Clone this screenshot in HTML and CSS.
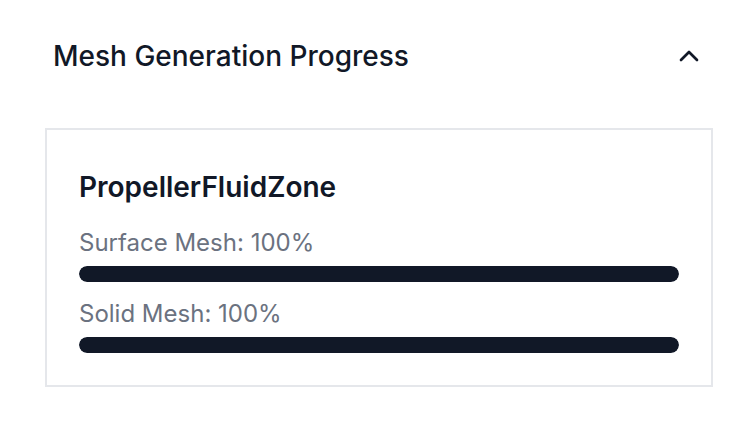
FILE: index.html
```html
<!DOCTYPE html>
<html>
<head>
<meta charset="utf-8">
<link rel="stylesheet" href="styles.css">
</head>
<body>
<div class="panel">
  <div class="header">
    <h2 class="title">Mesh Generation Progress</h2>
    <svg class="chev" width="32" height="32" viewBox="0 0 24 24" fill="none" stroke="#111827" stroke-width="2" stroke-linecap="round" stroke-linejoin="round"><path d="m18 15-6-6-6 6"/></svg>
  </div>
  <div class="card">
    <div class="zone">PropellerFluidZone</div>
    <div class="group">
      <div class="label">Surface Mesh: 100%</div>
      <div class="track"><div class="fill" style="width:100%"></div></div>
    </div>
    <div class="group">
      <div class="label">Solid Mesh: 100%</div>
      <div class="track"><div class="fill" style="width:100%"></div></div>
    </div>
  </div>
</div>
</body>
</html>
```
FILE: styles.css
```css
html, body {
  margin: 0;
  padding: 0;
  background: #ffffff;
  font-family: Inter, "Noto Sans", sans-serif;
  color: #111827;
}
.panel {
  padding: 40px 39px 0 45px;
}
.header {
  display: flex;
  align-items: center;
  justify-content: space-between;
  height: 32px;
  padding: 0 8px;
  margin-bottom: 56px;
}
.title {
  margin: 0;
  font-size: 28px;
  font-weight: 500;
  line-height: 32px;
  color: #111827;
}
.chev {
  display: block;
}
.card {
  border: 2px solid #e5e7eb;
  padding: 37px 32px 32px 32px;
  display: flex;
  flex-direction: column;
}
.zone {
  font-size: 28px;
  font-weight: 600;
  line-height: 40px;
  margin-bottom: 4px;
}
.group {
  margin-top: 16px;
}
.label {
  font-size: 24px;
  line-height: 32px;
  color: #6b7280;
}
.track {
  margin-top: 7px;
  height: 16px;
  border-radius: 8px;
  background: #e5e7eb;
  overflow: hidden;
}
.fill {
  height: 100%;
  background: #111827;
  border-radius: 8px;
}
```
